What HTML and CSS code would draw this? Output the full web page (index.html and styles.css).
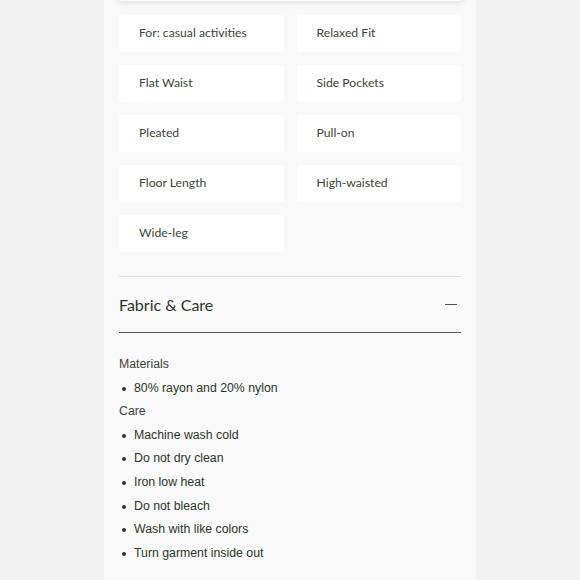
FILE: index.html
```html
<!DOCTYPE html>
<html>
<head>
<meta charset="utf-8">
<link rel="stylesheet" href="styles.css">
</head>
<body>
<div class="column">
  <div class="topcard"></div>
  <div class="features">
    <div class="chip">For: casual activities</div>
    <div class="chip">Relaxed Fit</div>
    <div class="chip">Flat Waist</div>
    <div class="chip">Side Pockets</div>
    <div class="chip">Pleated</div>
    <div class="chip">Pull-on</div>
    <div class="chip">Floor Length</div>
    <div class="chip">High-waisted</div>
    <div class="chip">Wide-leg</div>
  </div>
  <div class="accordion">
    <div class="acc-head">
      <span class="acc-title">Fabric &amp; Care</span>
      <span class="minus"></span>
    </div>
    <div class="acc-body">
      <div class="sub">Materials</div>
      <ul class="list">
        <li>80% rayon and 20% nylon</li>
      </ul>
      <div class="sub">Care</div>
      <ul class="list">
        <li>Machine wash cold</li>
        <li>Do not dry clean</li>
        <li>Iron low heat</li>
        <li>Do not bleach</li>
        <li>Wash with like colors</li>
        <li>Turn garment inside out</li>
      </ul>
    </div>
  </div>
</div>
</body>
</html>
```
FILE: styles.css
```css
html, body {
  margin: 0;
  padding: 0;
  background: #f2f2f2;
}
.column {
  width: 342px;
  margin: 0 auto;
  padding: 0 15px 40px;
  background: #f9f9f9;
  min-height: 580px;
  box-sizing: content-box;
  overflow: hidden;
}
.topcard {
  height: 100px;
  margin: -99px -3px 0;
  background: #ffffff;
  border-radius: 6px;
  box-shadow: 0 2px 6px rgba(0,0,0,0.10);
}
.features {
  display: grid;
  grid-template-columns: 1fr 1fr;
  column-gap: 13px;
  row-gap: 13px;
  margin-top: 14px;
}
.chip {
  height: 37px;
  box-sizing: border-box;
  padding: 0 0 2px 20px;
  display: flex;
  align-items: center;
  background: #ffffff;
  border-radius: 4px;
  font-family: Lato, "Liberation Sans", sans-serif;
  font-size: 12.2px;
  color: #3a4535;
}
.accordion {
  margin-top: 24px;
  border-top: 1px solid #dcdcdc;
}
.acc-head {
  height: 55px;
  display: flex;
  align-items: center;
  justify-content: space-between;
  border-bottom: 1.5px solid #4e5649;
}
.acc-title {
  font-family: Lato, "Liberation Sans", sans-serif;
  font-size: 16px;
  color: #2b3626;
  padding-bottom: 1px;
}
.minus {
  width: 12px;
  height: 1.5px;
  background: #4e5649;
  margin-right: 4px;
}
.acc-body {
  padding-top: 20px;
  font-family: "Liberation Sans", Arial, sans-serif;
  font-size: 12.3px;
  line-height: 23.6px;
  color: #2b3626;
}
.sub {
  color: #3a4435;
}
.list {
  margin: 0;
  padding: 0 0 0 15px;
  list-style: none;
}
.list li {
  position: relative;
}
.list li::before {
  content: "";
  position: absolute;
  left: -12px;
  top: 10px;
  width: 4px;
  height: 4px;
  border-radius: 50%;
  background: #2b3626;
}
```
